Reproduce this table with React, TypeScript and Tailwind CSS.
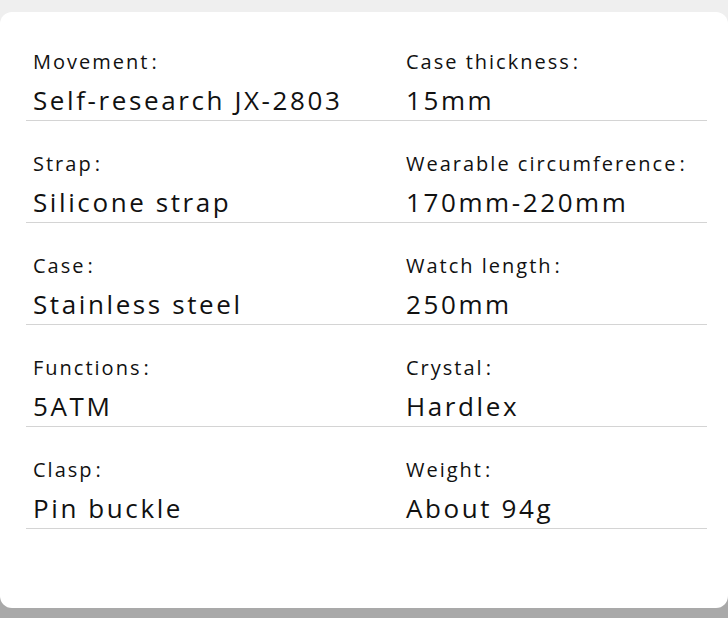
import React from "react";

const rows: [string, string, string, string][] = [
  ["Movement", "Self-research JX-2803", "Case thickness", "15mm"],
  ["Strap", "Silicone strap", "Wearable circumference", "170mm-220mm"],
  ["Case", "Stainless steel", "Watch length", "250mm"],
  ["Functions", "5ATM", "Crystal", "Hardlex"],
  ["Clasp", "Pin buckle", "Weight", "About 94g"],
];

function Cell({ label, value }: { label: string; value: string }) {
  return (
    <div className="pl-[7px]">
      <div className="text-[20px] leading-[24px] tracking-[0.1em] text-[#111]">
        {label}
        <span className="ml-[2px]">:</span>
      </div>
      <div className="mt-[10px] text-[26px] leading-[32px] tracking-[0.1em] text-[#111]">{value}</div>
    </div>
  );
}

export default function App() {
  return (
    <div
      className="h-[618px] w-[728px] overflow-hidden bg-[linear-gradient(to_bottom,#efefef_50%,#a9a9a9_50%)] pt-[12px]"
      style={{ fontFamily: "'Open Sans', sans-serif" }}
    >
      <div className="h-[596px] rounded-[12px] bg-white pl-[26px] pr-[21px] pt-[7px]">
        {rows.map(([l1, v1, l2, v2], i) => (
          <div
            key={i}
            className="grid grid-cols-[373px_1fr] border-b border-[#d4d4d4] pb-[4px] pt-[31px]"
          >
            <Cell label={l1} value={v1} />
            <Cell label={l2} value={v2} />
          </div>
        ))}
      </div>
    </div>
  );
}
